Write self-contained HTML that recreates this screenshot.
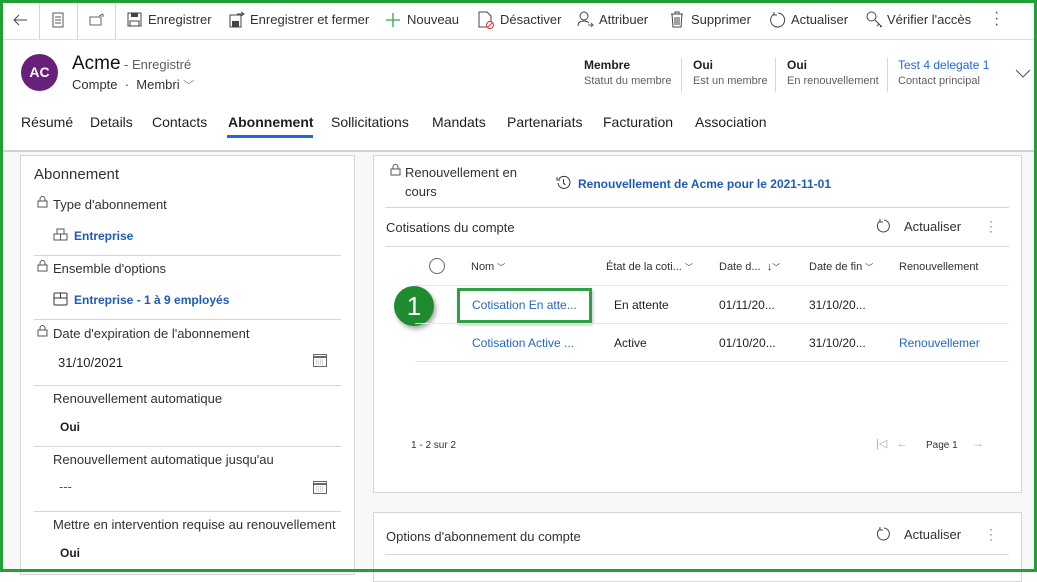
<!DOCTYPE html>
<html><head><meta charset="utf-8"><style>
*{box-sizing:border-box;margin:0;padding:0}
body{width:1037px;height:572px;overflow:hidden;font-family:"Liberation Sans",sans-serif;color:#201f1e;background:#fff;position:relative;font-size:13px}
.a{position:absolute;white-space:nowrap}
.frame{position:absolute;left:0;top:0;width:1037px;height:572px;border:3px solid #22a038;z-index:10;pointer-events:none}
.cmd{font-size:13px;color:#323130}
.lbl{font-size:13px;color:#323130}
.link{color:#1f5bb5}
.sep{position:absolute;background:#d6d6d6}
.panel{position:absolute;background:#fff;border:1px solid #d6d6d6}
</style></head><body>
<div class="frame"></div>
<!-- toolbar -->
<div class="a" style="left:0;top:0;width:1037px;height:40px;background:#fff;border-bottom:1px solid #e1dfdd"></div>
<div class="sep" style="left:39px;top:3px;width:1px;height:36px"></div>
<div class="sep" style="left:77px;top:3px;width:1px;height:36px"></div>
<div class="sep" style="left:115px;top:3px;width:1px;height:36px"></div>
<svg class="a" style="left:12px;top:12px" width="16" height="16"><path d="M15 8H2M7 3L2 8l5 5" stroke="#444" fill="none"/></svg>
<svg class="a" style="left:52px;top:12px" width="12" height="16"><rect x="1" y="1" width="10" height="14" stroke="#555" fill="none"/><path d="M3 5h6M3 8h6M3 11h6" stroke="#555"/></svg>
<svg class="a" style="left:89px;top:13px" width="16" height="14"><rect x="1" y="4" width="11" height="8" stroke="#666" fill="none"/><path d="M10 3l4-2M14 1v3" stroke="#666" fill="none"/></svg>
<svg class="a" style="left:127px;top:12px" width="15" height="15"><rect x="1" y="1" width="13" height="13" stroke="#444" fill="none"/><rect x="4" y="1" width="7" height="4" fill="#444"/><rect x="3" y="9" width="9" height="5" stroke="#444" fill="none"/></svg>
<div class="a cmd" style="left:148px;top:12px">Enregistrer</div>
<svg class="a" style="left:229px;top:11px" width="16" height="17"><rect x="1" y="4" width="11" height="12" stroke="#444" fill="none"/><rect x="3" y="10" width="7" height="6" fill="#444"/><path d="M8 3h7M12 1l3 2-3 2" stroke="#444" fill="none"/></svg>
<div class="a cmd" style="left:250px;top:12px">Enregistrer et fermer</div>
<svg class="a" style="left:385px;top:12px" width="16" height="16"><path d="M8 1v14M1 8h14" stroke="#2ea84c" stroke-width="1.3"/></svg>
<div class="a cmd" style="left:407px;top:12px">Nouveau</div>
<svg class="a" style="left:478px;top:11px" width="16" height="18"><path d="M1 1h8l4 4v11H1z" stroke="#444" fill="none"/><circle cx="12" cy="14" r="3.5" fill="#fff" stroke="#d13438"/><path d="M10 16l4-4" stroke="#d13438"/></svg>
<div class="a cmd" style="left:500px;top:12px">Désactiver</div>
<svg class="a" style="left:577px;top:11px" width="17" height="17"><circle cx="7" cy="5" r="4" stroke="#444" fill="none"/><path d="M1 15c0-4 3-5 6-5s4 1 5 2" stroke="#444" fill="none"/><path d="M11 14h5M14 12l2 2-2 2" stroke="#2266c4" fill="none"/></svg>
<div class="a cmd" style="left:599px;top:12px">Attribuer</div>
<svg class="a" style="left:670px;top:11px" width="14" height="17"><path d="M1 3h12M5 3V1h4v2M2 3l1 13h8l1-13M5 6v8M7 6v8M9 6v8" stroke="#444" fill="none"/></svg>
<div class="a cmd" style="left:691px;top:12px">Supprimer</div>
<svg class="a" style="left:769px;top:11px" width="17" height="17"><path d="M5 3A7 7 0 1 0 9 2" stroke="#444" fill="none"/><path d="M5 1v3h3" stroke="#444" fill="none"/></svg>
<div class="a cmd" style="left:791px;top:12px">Actualiser</div>
<svg class="a" style="left:866px;top:11px" width="17" height="17"><circle cx="5.5" cy="5.5" r="4.5" stroke="#444" fill="none"/><path d="M9 9l7 7M13 13l-2 2M15 15l-1 1" stroke="#444" fill="none"/></svg>
<div class="a cmd" style="left:887px;top:12px">Vérifier l'accès</div>
<div class="a" style="left:994px;top:10px;font-size:16px;color:#555;line-height:6px">·<br>·<br>·</div>
<!-- header -->
<div class="a" style="left:21px;top:54px;width:37px;height:37px;border-radius:50%;background:#68217a;color:#fff;font-weight:bold;font-size:14px;text-align:center;line-height:37px">AC</div>
<div class="a" style="left:72px;top:53px;font-size:19px;color:#111">Acme</div>
<div class="a" style="left:124px;top:57px;font-size:13px;color:#605e5c">- Enregistré</div>
<div class="a" style="left:72px;top:77px;font-size:13px;color:#323130">Compte &nbsp;·&nbsp; Membri <span style="color:#888;font-size:11px">﹀</span></div>
<div class="a" style="left:584px;top:58px;font-weight:bold;font-size:12px">Membre</div>
<div class="a" style="left:584px;top:75px;font-size:11px;color:#605e5c">Statut du membre</div>
<div class="sep" style="left:681px;top:58px;width:1px;height:34px"></div>
<div class="a" style="left:693px;top:58px;font-weight:bold;font-size:12px">Oui</div>
<div class="a" style="left:693px;top:75px;font-size:11px;color:#605e5c">Est un membre</div>
<div class="sep" style="left:775px;top:58px;width:1px;height:34px"></div>
<div class="a" style="left:787px;top:58px;font-weight:bold;font-size:12px">Oui</div>
<div class="a" style="left:787px;top:75px;font-size:11px;color:#605e5c">En renouvellement</div>
<div class="sep" style="left:887px;top:58px;width:1px;height:34px"></div>
<div class="a" style="left:898px;top:58px;font-size:12px;color:#2266e3">Test 4 delegate 1</div>
<div class="a" style="left:898px;top:75px;font-size:11px;color:#605e5c">Contact principal</div>
<svg class="a" style="left:1015px;top:69px" width="16" height="10"><path d="M1 1l7 7 7-7" stroke="#555" fill="none"/></svg>
<!-- tabs -->
<div class="a" style="left:21px;top:114px;font-size:14px;color:#201f1e;word-spacing:0">Résumé</div>
<div class="a" style="left:90px;top:114px;font-size:14px">Details</div>
<div class="a" style="left:152px;top:114px;font-size:14px">Contacts</div>
<div class="a" style="left:228px;top:114px;font-size:14px;font-weight:bold">Abonnement</div>
<div class="a" style="left:227px;top:135px;width:86px;height:3px;background:#2266e3"></div>
<div class="a" style="left:331px;top:114px;font-size:14px">Sollicitations</div>
<div class="a" style="left:432px;top:114px;font-size:14px">Mandats</div>
<div class="a" style="left:507px;top:114px;font-size:14px">Partenariats</div>
<div class="a" style="left:603px;top:114px;font-size:14px">Facturation</div>
<div class="a" style="left:695px;top:114px;font-size:14px">Association</div>
<!-- body bg -->
<div class="a" style="left:0;top:150px;width:1037px;height:422px;background:#f8f8f8;border-top:2px solid #d0d0d0"></div>
<!-- left panel -->
<div class="panel" style="left:20px;top:155px;width:335px;height:420px"></div>
<div class="a" style="left:34px;top:166px;font-size:15px;color:#323130">Abonnement</div>
<svg class="a" style="left:37px;top:196px" width="11" height="12"><rect x="1" y="5" width="9" height="6" stroke="#555" fill="none"/><path d="M3 5V3a2.5 2.5 0 0 1 5 0v2" stroke="#555" fill="none"/></svg>
<div class="a lbl" style="left:53px;top:197px">Type d'abonnement</div>
<svg class="a" style="left:53px;top:228px" width="15" height="13"><rect x="1" y="6" width="13" height="6" stroke="#555" fill="none"/><rect x="4" y="1" width="7" height="5" stroke="#555" fill="none"/><path d="M7.5 6v6" stroke="#555"/></svg>
<div class="a link" style="left:74px;top:229px;font-weight:bold;font-size:12px">Entreprise</div>
<div class="sep" style="left:34px;top:255px;width:307px;height:1px"></div>
<svg class="a" style="left:37px;top:260px" width="11" height="12"><rect x="1" y="5" width="9" height="6" stroke="#555" fill="none"/><path d="M3 5V3a2.5 2.5 0 0 1 5 0v2" stroke="#555" fill="none"/></svg>
<div class="a lbl" style="left:53px;top:261px">Ensemble d'options</div>
<svg class="a" style="left:53px;top:292px" width="15" height="14"><rect x="1" y="1" width="13" height="12" rx="1" stroke="#333" fill="none"/><path d="M1 6h13M7.5 1v5" stroke="#333"/></svg>
<div class="a link" style="left:74px;top:293px;font-weight:bold;font-size:12px">Entreprise - 1 à 9 employés</div>
<div class="sep" style="left:34px;top:319px;width:307px;height:1px"></div>
<svg class="a" style="left:37px;top:325px" width="11" height="12"><rect x="1" y="5" width="9" height="6" stroke="#555" fill="none"/><path d="M3 5V3a2.5 2.5 0 0 1 5 0v2" stroke="#555" fill="none"/></svg>
<div class="a lbl" style="left:53px;top:326px">Date d'expiration de l'abonnement</div>
<div class="a" style="left:58px;top:355px;font-size:13px">31/10/2021</div>
<svg class="a" style="left:313px;top:353px" width="14" height="14"><rect x="0.5" y="1.5" width="13" height="12" stroke="#666" fill="none"/><path d="M0.5 4h13" stroke="#666" stroke-width="2"/><path d="M3 7h8M3 9h8M3 11h8" stroke="#aaa" stroke-dasharray="1 1"/></svg>
<div class="sep" style="left:34px;top:385px;width:307px;height:1px"></div>
<div class="a lbl" style="left:53px;top:391px">Renouvellement automatique</div>
<div class="a" style="left:60px;top:420px;font-weight:bold;font-size:12px">Oui</div>
<div class="sep" style="left:34px;top:446px;width:307px;height:1px"></div>
<div class="a lbl" style="left:53px;top:452px">Renouvellement automatique jusqu'au</div>
<div class="a" style="left:59px;top:479px;color:#555">---</div>
<svg class="a" style="left:313px;top:480px" width="14" height="14"><rect x="0.5" y="1.5" width="13" height="12" stroke="#666" fill="none"/><path d="M0.5 4h13" stroke="#666" stroke-width="2"/><path d="M3 7h8M3 9h8M3 11h8" stroke="#aaa" stroke-dasharray="1 1"/></svg>
<div class="sep" style="left:34px;top:511px;width:307px;height:1px"></div>
<div class="a lbl" style="left:53px;top:517px">Mettre en intervention requise au renouvellement</div>
<div class="a" style="left:60px;top:546px;font-weight:bold;font-size:12px">Oui</div>
<!-- right panel -->
<div class="panel" style="left:373px;top:155px;width:649px;height:338px"></div>
<svg class="a" style="left:390px;top:164px" width="11" height="12"><rect x="1" y="5" width="9" height="6" stroke="#555" fill="none"/><path d="M3 5V3a2.5 2.5 0 0 1 5 0v2" stroke="#555" fill="none"/></svg>
<div class="a lbl" style="left:405px;top:165px">Renouvellement en</div>
<div class="a lbl" style="left:405px;top:184px">cours</div>
<svg class="a" style="left:556px;top:175px" width="15" height="15"><path d="M3 4A6 6 0 1 1 2 8" stroke="#333" fill="none"/><path d="M1 2v3h3M7.5 4v4l2 2" stroke="#333" fill="none"/></svg>
<div class="a link" style="left:578px;top:177px;font-weight:bold;font-size:12px">Renouvellement de Acme pour le 2021-11-01</div>
<div class="sep" style="left:385px;top:207px;width:624px;height:1px"></div>
<div class="a" style="left:386px;top:220px;font-size:13px;color:#323130">Cotisations du compte</div>
<svg class="a" style="left:876px;top:218px" width="14" height="15"><path d="M4 3A6 6 0 1 0 8 2" stroke="#444" fill="none"/><path d="M4 1v3h3" stroke="#444" fill="none"/></svg>
<div class="a" style="left:904px;top:219px;font-size:13px;color:#323130">Actualiser</div>
<div class="a" style="left:989px;top:219px;font-size:12px;color:#666;line-height:5px">·<br>·<br>·</div>
<div class="sep" style="left:385px;top:246px;width:624px;height:1px"></div>
<div class="a" style="left:429px;top:258px;width:16px;height:16px;border:1px solid #666;border-radius:50%"></div>
<div class="a" style="left:471px;top:261px;font-size:11px;color:#323130">Nom <span style="font-size:8px">﹀</span></div>
<div class="a" style="left:606px;top:261px;font-size:11px;color:#323130">État de la coti... <span style="font-size:8px">﹀</span></div>
<div class="a" style="left:719px;top:261px;font-size:11px;color:#323130">Date d... &nbsp;↓<span style="font-size:8px">﹀</span></div>
<div class="a" style="left:809px;top:261px;font-size:11px;color:#323130">Date de fin <span style="font-size:8px">﹀</span></div>
<div class="a" style="left:899px;top:261px;font-size:11px;color:#323130">Renouvellement</div>
<div class="sep" style="left:415px;top:285px;width:594px;height:1px;background:#e6e6e6"></div>
<div class="a" style="left:394px;top:286px;width:40px;height:40px;border-radius:50%;background:#1e8c2e;box-shadow:2px 3px 5px rgba(0,0,0,.35);color:#fff;font-size:26px;text-align:center;line-height:40px">1</div>
<div class="a" style="left:457px;top:288px;width:135px;height:35px;border:3px solid #2ea043;box-shadow:1px 2px 3px rgba(0,0,0,.25)"></div>
<div class="a link" style="left:472px;top:298px;font-size:12px;color:#2266c4">Cotisation En atte...</div>
<div class="a" style="left:614px;top:298px;font-size:12px">En attente</div>
<div class="a" style="left:719px;top:298px;font-size:12px">01/11/20...</div>
<div class="a" style="left:809px;top:298px;font-size:12px">31/10/20...</div>
<div class="sep" style="left:415px;top:323px;width:594px;height:1px;background:#e6e6e6"></div>
<div class="a" style="left:472px;top:336px;font-size:12px;color:#2266c4">Cotisation Active ...</div>
<div class="a" style="left:614px;top:336px;font-size:12px">Active</div>
<div class="a" style="left:719px;top:336px;font-size:12px">01/10/20...</div>
<div class="a" style="left:809px;top:336px;font-size:12px">31/10/20...</div>
<div class="a" style="left:899px;top:336px;font-size:12px;color:#2266c4;width:81px;overflow:hidden">Renouvellement</div>
<div class="sep" style="left:415px;top:361px;width:594px;height:1px;background:#e6e6e6"></div>
<div class="a" style="left:411px;top:440px;font-size:10px;color:#323130">1 - 2 sur 2</div>
<div class="a" style="left:876px;top:437px;font-size:11px;color:#aaa">|◁ &nbsp; ←</div>
<div class="a" style="left:926px;top:440px;font-size:10px;color:#323130">Page 1</div>
<div class="a" style="left:972px;top:436px;font-size:12px;color:#aaa">→</div>
<div class="panel" style="left:373px;top:512px;width:649px;height:70px"></div>
<div class="a" style="left:386px;top:529px;font-size:13px;color:#323130">Options d'abonnement du compte</div>
<svg class="a" style="left:876px;top:526px" width="14" height="15"><path d="M4 3A6 6 0 1 0 8 2" stroke="#444" fill="none"/><path d="M4 1v3h3" stroke="#444" fill="none"/></svg>
<div class="a" style="left:904px;top:527px;font-size:13px;color:#323130">Actualiser</div>
<div class="a" style="left:989px;top:527px;font-size:12px;color:#666;line-height:5px">·<br>·<br>·</div>
<div class="sep" style="left:385px;top:554px;width:624px;height:1px"></div>
</body></html>
